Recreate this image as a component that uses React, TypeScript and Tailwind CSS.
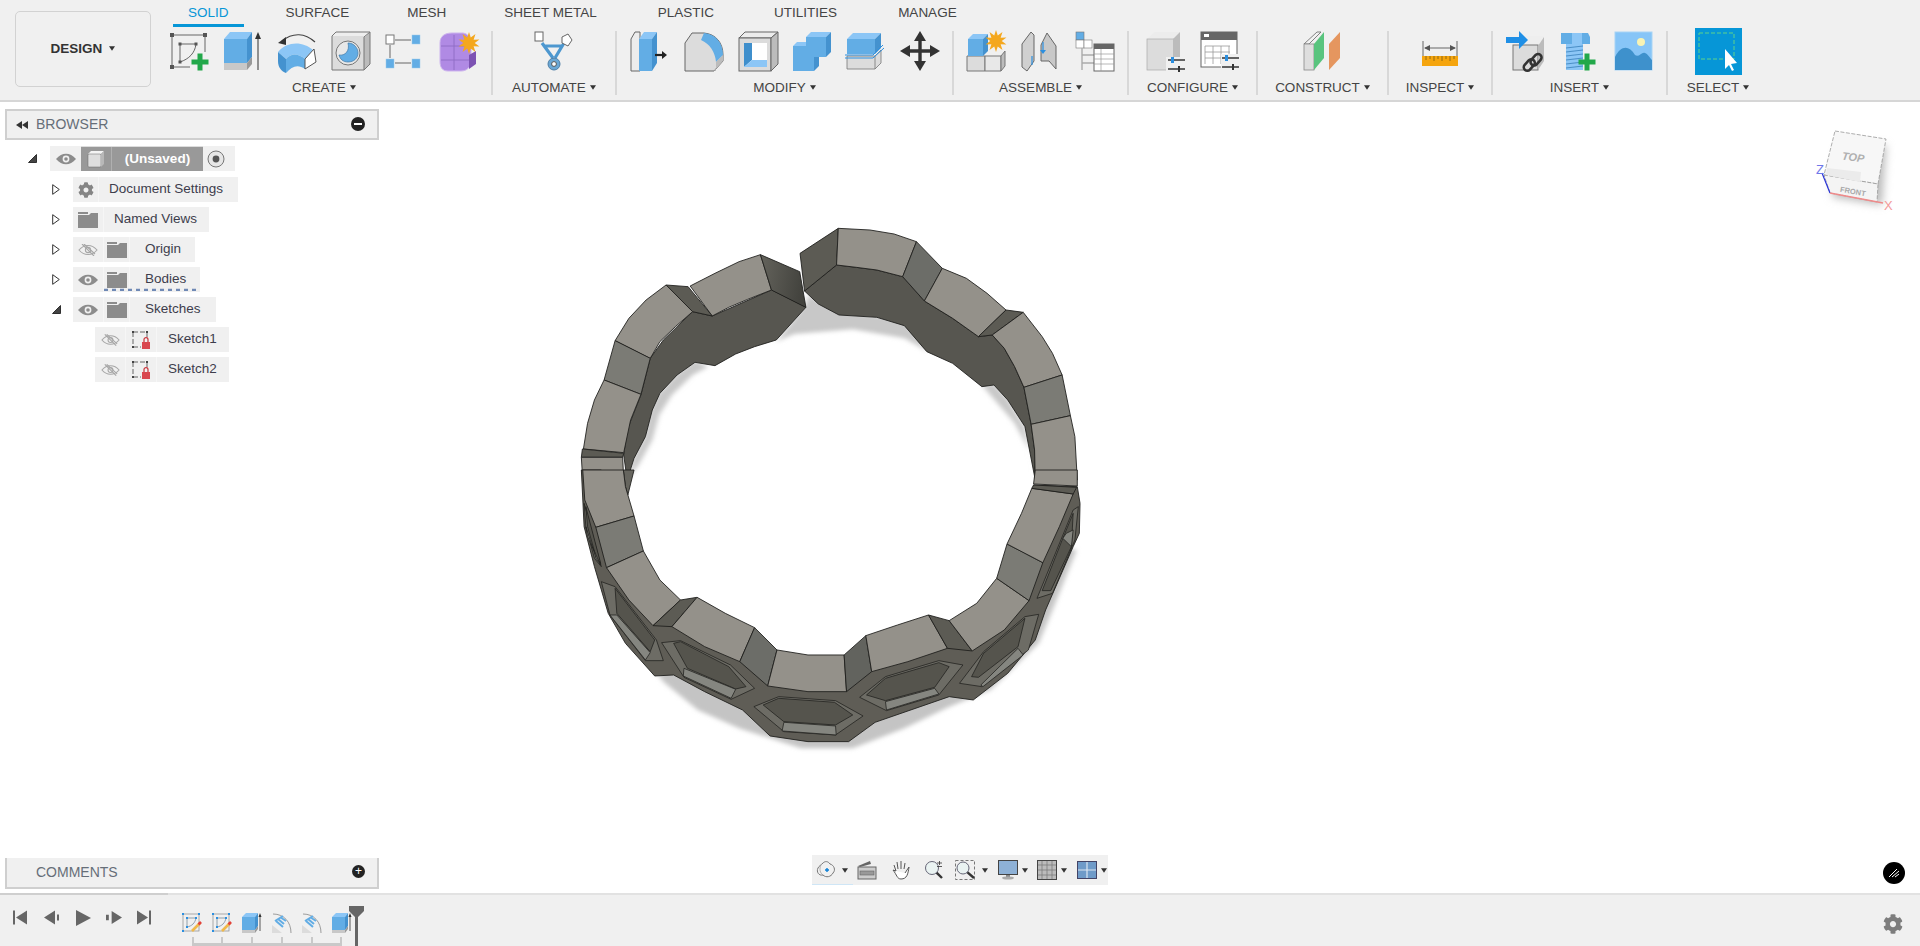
import { Fragment } from "react";
import type { ReactNode } from "react";
import { FaCog } from "react-icons/fa";

const starPoints = (cx: number, cy: number, r: number, n = 10) => {
  const pts: string[] = [];
  for (let i = 0; i < n * 2; i++) {
    const rad = i % 2 === 0 ? r : r * 0.52;
    const a = (Math.PI * i) / n - Math.PI / 2;
    pts.push(`${cx + rad * Math.cos(a)},${cy + rad * Math.sin(a)}`);
  }
  return pts.join(" ");
};

const Ico = ({ children, box = "0 0 40 40", cls = "w-10 h-10" }: { children: ReactNode; box?: string; cls?: string }) => (
  <svg viewBox={box} className={`${cls} shrink-0 overflow-visible`}>
    {children}
  </svg>
);

const Caret = ({ cls = "ml-[4px]" }: { cls?: string }) => (
  <svg viewBox="0 0 7 5" className={`w-[6px] h-[5px] inline-block align-[2px] ${cls}`}>
    <polygon points="0,0 7,0 3.5,5" fill="#333" />
  </svg>
);

const Plus = ({ x, y, s = 16 }: { x: number; y: number; s?: number }) => (
  <path d={`M${x - s / 2} ${y}H${x + s / 2}M${x} ${y - s / 2}V${y + s / 2}`} stroke="#22a84a" strokeWidth={s / 3.4} fill="none" />
);

const Cube = ({ x, y, w, h, d, top = "#8cc6f6", front = "#62ade5", side = "#4492cf" }: { x: number; y: number; w: number; h: number; d: number; top?: string; front?: string; side?: string }) => (
  <g>
    <polygon points={`${x},${y} ${x + d},${y - d} ${x + w + d},${y - d} ${x + w},${y}`} fill={top} />
    <rect x={x} y={y} width={w} height={h} fill={front} />
    <polygon points={`${x + w},${y} ${x + w + d},${y - d} ${x + w + d},${y + h - d} ${x + w},${y + h}`} fill={side} />
  </g>
);

const SketchIcon = () => (
  <Ico>
    <path d="M3 4H36M3 4V36M3 36H21M36 4V21" stroke="#666" strokeWidth="1" fill="none" />
    {[[3, 4], [36, 4], [3, 36]].map(([x, y]) => (
      <rect key={x * y + x} x={x - 2} y={y - 2} width="4" height="4" fill="#555" />
    ))}
    <path d="M11 13H27M11 13V31M27 13C26 22 20 28 11 31" stroke="#666" strokeWidth="1" fill="none" />
    {[[11, 13], [27, 13], [11, 31]].map(([x, y]) => (
      <rect key={x * y + x} x={x - 1.5} y={y - 1.5} width="3" height="3" fill="#555" />
    ))}
    <Plus x={31} y={31} s={17} />
  </Ico>
);

const ExtrudeIcon = () => (
  <Ico>
    <polygon points="1,8 7,1 29,1 24,8" fill="#8cc6f6" />
    <rect x="1" y="8" width="23" height="24" fill="#62ade5" />
    <polygon points="24,8 29,1 29,26 24,32" fill="#4492cf" />
    <rect x="1" y="32" width="23" height="7" fill="#c8c8c8" />
    <polygon points="24,32 29,26 29,33 24,39" fill="#999" />
    <path d="M35 39V4" stroke="#333" strokeWidth="1" />
    <polygon points="32,8 35,1 38,8" fill="#333" />
  </Ico>
);

const RevolveIcon = () => (
  <Ico>
    <path d="M5 10C16 1 28 2 38 11" stroke="#444" strokeWidth="1.2" fill="none" />
    <polygon points="1,12 9,6 9,14" fill="#333" />
    <path d="M1 21C10 10 26 10 36 19L28 28C21 22 14 22 9 28Z" fill="#8cc6f6" />
    <path d="M1 21L9 28V42C4 40 1 36 1 30Z" fill="#4492cf" />
    <path d="M9 28C14 22 21 22 28 28V38C21 33 15 35 9 42Z" fill="#62ade5" />
    <path d="M28 28L37 18L39 31L28 38Z" fill="#fff" stroke="#555" strokeWidth="1" />
  </Ico>
);

const BoxCircleIcon = () => (
  <Ico>
    <polygon points="1,4 5,1 39,1 33,7 1,7" fill="#eee" />
    <rect x="1" y="5" width="33" height="34" fill="#dcdcdc" />
    <polygon points="33,7 39,1 39,33 33,39" fill="#bcbcbc" />
    <path d="M1 39V5L5 1H39V33L33 39ZM33 39V6L39 1" stroke="#777" strokeWidth="1" fill="none" />
    <circle cx="17" cy="22" r="12" fill="#e8e8e8" stroke="#777" strokeWidth="1" />
    <path d="M17 12C23 12 27 17 27 22C27 27 23 31 17 31C12 31 9 28 8 24C14 25 19 20 17 12Z" fill="#62ade5" stroke="#3d78a8" strokeWidth=".7" />
  </Ico>
);

const PatternIcon = () => (
  <Ico>
    <path d="M10 9H26M5 14V27M10 32H26" stroke="#666" strokeWidth="1" />
    <rect x="1" y="4" width="8" height="9" fill="#fff" stroke="#777" />
    <rect x="27" y="4" width="8" height="9" fill="#62ade5" stroke="#9cc9ea" strokeWidth=".5" />
    <rect x="1" y="28" width="8" height="9" fill="#62ade5" stroke="#9cc9ea" strokeWidth=".5" />
    <rect x="27" y="28" width="8" height="9" fill="#62ade5" stroke="#9cc9ea" strokeWidth=".5" />
  </Ico>
);

const FormIcon = () => (
  <Ico>
    <path d="M1 12C1 5 6 2 13 2H24C30 3 32 8 32 14V30C32 36 28 40 22 40H9C3 40 1 36 1 30Z" fill="#b08ae4" stroke="#cdb4ee" />
    <path d="M2 15H30M2 29H30M15 4V39" stroke="#8f6bc4" strokeWidth=".9" />
    <path d="M30 24L37 20V33L30 38Z" fill="#7d53b3" />
    <polygon points={starPoints(30, 12, 11)} fill="#f4a71d" />
  </Ico>
);

const AutomateIcon = () => (
  <Ico>
    <path d="M8 12L19 27M30 12L21 27M11 15H28M19 27V33" stroke="#4d97cf" strokeWidth="3.2" fill="none" />
    <rect x="1" y="1" width="8" height="9" fill="#fff" stroke="#666" />
    <polygon points="28,6 34,3 38,9 34,15 28,12" fill="#fff" stroke="#666" />
    <circle cx="20" cy="33" r="6" fill="#6aa7d4" stroke="#4d7ea6" />
    <circle cx="20" cy="33" r="2.4" fill="#fff" stroke="#555" />
  </Ico>
);

const PressPullIcon = () => (
  <Ico>
    <polygon points="1,8 5,1 10,1 10,40 1,40" fill="#ececec" stroke="#666" />
    <polygon points="9,8 14,1 27,1 22,8" fill="#8cc6f6" />
    <rect x="9" y="8" width="13" height="32" fill="#62ade5" />
    <polygon points="22,8 27,1 27,32 22,40" fill="#4492cf" />
    <path d="M25 24H32" stroke="#222" strokeWidth="2.2" />
    <polygon points="32,20 37,24 32,28" fill="#222" />
  </Ico>
);

const FilletIcon = () => (
  <Ico>
    <path d="M1 40V12L8 2H20C32 3 39 12 39 24V30L30 40Z" fill="#dcdcdc" stroke="#666" />
    <path d="M20 2C32 3 39 12 39 24L32 31C31 21 26 13 17 9Z" fill="#62ade5" />
    <path d="M30 40L39 30V24L32 31V40Z" fill="#bcbcbc" />
  </Ico>
);

const ShellIcon = () => (
  <Ico>
    <polygon points="1,7 7,1 40,1 33,7" fill="#ececec" stroke="#666" />
    <rect x="1" y="7" width="32" height="33" fill="#dcdcdc" stroke="#666" />
    <polygon points="33,7 40,1 40,33 33,40" fill="#bcbcbc" stroke="#666" />
    <rect x="6" y="12" width="23" height="24" fill="#fff" />
    <polygon points="6,12 14,12 14,29 6,36" fill="#3f8fcc" />
    <polygon points="14,29 29,29 29,36 6,36" fill="#8cc6f6" />
  </Ico>
);

const CombineIcon = () => (
  <Ico>
    <polygon points="1,15 5,11 15,11 15,15" fill="#8cc6f6" />
    <polygon points="14,6 19,1 39,1 34,6" fill="#8cc6f6" />
    <polygon points="1,15 14,15 14,6 34,6 34,26 22,26 22,40 1,40" fill="#62ade5" />
    <polygon points="34,6 39,1 39,21 34,26" fill="#4492cf" />
    <polygon points="22,26 27,26 27,35 22,40" fill="#4492cf" />
  </Ico>
);

const SplitIcon = () => (
  <Ico>
    <polygon points="1,25 29,25 35,19 35,32 29,38 1,38" fill="#dcdcdc" stroke="#777" strokeWidth=".8" />
    <path d="M29 25V38" stroke="#777" strokeWidth=".8" />
    <Cube x={1} y={8} w={28} h={15} d={6} />
    <path d="M-1 27H27L38 17M-1 24H27L37 14" stroke="#2b8fe0" strokeWidth="1" fill="none" />
  </Ico>
);

const MoveIcon = () => (
  <Ico>
    <path d="M20 8V32M8 20H32" stroke="#333" strokeWidth="3.4" />
    <polygon points="20,0 26,10 14,10" fill="#333" />
    <polygon points="20,40 26,30 14,30" fill="#333" />
    <polygon points="0,20 10,14 10,26" fill="#333" />
    <polygon points="40,20 30,14 30,26" fill="#333" />
  </Ico>
);

const AsmNewIcon = () => (
  <Ico>
    <polygon points="0,40 0,25 18,25 18,40" fill="#dcdcdc" stroke="#777" />
    <polygon points="18,40 18,25 34,25 34,40" fill="#e8e8e8" stroke="#777" />
    <polygon points="34,25 38,20 38,35 34,40" fill="#bcbcbc" stroke="#777" />
    <Cube x={1} y={8} w={15} h={17} d={5} />
    <polygon points={starPoints(29, 10, 11)} fill="#f4a71d" />
  </Ico>
);

const JointIcon = () => (
  <Ico>
    <path d="M1 13L10 1L13 4V30L6 40L1 36Z" fill="#d0d0d0" stroke="#666" />
    <path d="M20 24V14L26 2L35 15V38L28 30L20 30Z" fill="#c8c8c8" stroke="#666" />
    <path d="M11 25V34M22 11V20" stroke="#2b8fe0" strokeWidth="1.2" />
    <polygon points="19,19 25,19 22,23" fill="#2b8fe0" />
  </Ico>
);

const BomIcon = () => (
  <Ico>
    <rect x="1" y="1" width="8" height="8" fill="#62ade5" stroke="#777" strokeWidth=".6" />
    <rect x="1" y="9" width="8" height="8" fill="#fff" stroke="#777" strokeWidth=".6" />
    <rect x="9" y="9" width="8" height="8" fill="#fff" stroke="#777" strokeWidth=".6" />
    <path d="M7 17V39M7 24H19M7 32H19" stroke="#aaa" strokeWidth="1.4" />
    <rect x="19" y="13" width="20" height="27" fill="#fff" stroke="#666" />
    <rect x="19" y="13" width="20" height="5" fill="#666" />
    <path d="M19 23H39M19 28H39M19 33H39M26 18V40" stroke="#999" strokeWidth=".7" />
  </Ico>
);

const Sliders = ({ x, y }: { x: number; y: number }) => (
  <g>
    <path d={`M${x} ${y}H${x + 17}M${x} ${y + 9}H${x + 17}`} stroke="#333" strokeWidth="1.6" />
    <rect x={x + 3} y={y - 3} width="3" height="6" fill="#2b8fe0" />
    <rect x={x + 10} y={y + 6} width="2" height="6" fill="#333" />
  </g>
);

const ConfigCubeIcon = () => (
  <Ico>
    <polygon points="1,8 9,1 34,1 27,8" fill="#ececec" />
    <rect x="1" y="8" width="27" height="31" fill="#dcdcdc" stroke="#aaa" strokeWidth=".7" />
    <polygon points="27,8 34,1 34,30 27,38" fill="#bcbcbc" />
    <rect x="20" y="26" width="20" height="14" fill="#f0f0f0" />
    <Sliders x={22} y={29} />
  </Ico>
);

const ConfigTableIcon = () => (
  <Ico>
    <rect x="1" y="1" width="36" height="35" fill="#fff" stroke="#666" />
    <rect x="1" y="1" width="36" height="8" fill="#666" />
    <rect x="4" y="3" width="5" height="3" fill="#fff" />
    <path d="M5 15H30M5 21H30M5 27H30M5 15V33M13 15V33M21 15V33M29 15V33" stroke="#999" strokeWidth=".8" />
    <rect x="21" y="23" width="19" height="18" fill="#f0f0f0" />
    <Sliders x={22} y={27} />
  </Ico>
);

const ConstructIcon = () => (
  <Ico>
    <polygon points="1,13 14,1 18,1 6,13" fill="#f2f2f2" stroke="#666" strokeWidth=".8" />
    <rect x="1" y="13" width="10" height="26" fill="#dedede" stroke="#888" strokeWidth=".8" />
    <polygon points="11,13 21,1 21,27 11,39" fill="#59c47e" />
    <polygon points="26,13 37,1 37,27 26,39" fill="#e5965f" />
  </Ico>
);

const MeasureIcon = () => (
  <Ico box="0 0 36 30" cls="w-[36px] h-[30px] mt-[10px]">
    <path d="M1 0V15M35 0V15M3 7H33" stroke="#666" strokeWidth="1" />
    <polygon points="2,7 8,4 8,10" fill="#555" />
    <polygon points="34,7 28,4 28,10" fill="#555" />
    <rect x="0" y="15" width="36" height="10" fill="#f5a50e" />
    <path d="M4 15V19M8 15V18M12 15V20M16 15V18M20 15V20M24 15V18M28 15V20M32 15V18" stroke="#7a5b12" strokeWidth=".8" />
  </Ico>
);

const DeriveIcon = () => (
  <Ico>
    <polygon points="7,15 13,5 38,5 33,15" fill="#eee" />
    <rect x="7" y="14" width="25" height="25" fill="#dcdcdc" stroke="#777" />
    <polygon points="32,15 38,6 38,30 32,39" fill="#bcbcbc" />
    <path d="M0 9H14" stroke="#1f8fe6" strokeWidth="6" />
    <polygon points="13,0 22,9 13,18" fill="#1f8fe6" />
    <g fill="none" stroke="#333" strokeWidth="2.6">
      <rect x="27" y="22" width="7" height="13" rx="3.5" transform="rotate(42 30 28)" />
      <rect x="20" y="28" width="7" height="13" rx="3.5" transform="rotate(42 24 34)" />
    </g>
  </Ico>
);

const BoltIcon = () => (
  <Ico>
    <polygon points="1,2 28,2 30,6 30,13 1,13" fill="#62ade5" />
    <rect x="12" y="2" width="10" height="11" fill="#8cc6f6" />
    <rect x="6" y="13" width="17" height="26" fill="#8cc6f6" />
    <path d="M6 17L23 15M6 21L23 19M6 25L23 23M6 29L23 27M6 33L23 31M6 37L23 35" stroke="#4b8fc7" strokeWidth="1.1" />
    <Plus x={27} y={31} s={17} />
  </Ico>
);

const PictureIcon = () => (
  <Ico>
    <rect x="1" y="1" width="37" height="38" fill="#87c5f7" stroke="#a7d4f5" />
    <path d="M1 26C7 14 15 14 21 24C25 27 28 20 31 22C34 23 36 27 38 29V39H1Z" fill="#3e91cc" />
    <circle cx="27" cy="11" r="4" fill="#f8f3b4" />
  </Ico>
);

const SelectIcon = () => (
  <svg viewBox="0 0 47 47" className="w-[47px] h-[47px] -mt-[3px]">
    <rect width="47" height="47" fill="#0696d7" />
    <rect x="4" y="5" width="35" height="26" fill="none" stroke="#5fd38a" strokeWidth="1" strokeDasharray="4 2" />
    <polygon points="30,21 30,41 34,37 37,43 39,42 36,36 42,35" fill="#fff" />
  </svg>
);

const groups: { label: string; cls: string; icons: ReactNode[] }[] = [
  { label: "CREATE", cls: "w-[336px] border-r-2", icons: [<SketchIcon />, <ExtrudeIcon />, <RevolveIcon />, <BoxCircleIcon />, <PatternIcon />, <FormIcon />] },
  { label: "AUTOMATE", cls: "w-[124px] border-r-2", icons: [<AutomateIcon />] },
  { label: "MODIFY", cls: "w-[337px] border-r-2", icons: [<PressPullIcon />, <FilletIcon />, <ShellIcon />, <CombineIcon />, <SplitIcon />, <MoveIcon />] },
  { label: "ASSEMBLE", cls: "w-[175px] border-r-2", icons: [<AsmNewIcon />, <JointIcon />, <BomIcon />] },
  { label: "CONFIGURE", cls: "w-[129px] border-r-2", icons: [<ConfigCubeIcon />, <ConfigTableIcon />] },
  { label: "CONSTRUCT", cls: "w-[131px] border-r-2", icons: [<ConstructIcon />] },
  { label: "INSPECT", cls: "w-[104px] border-r-2", icons: [<MeasureIcon />] },
  { label: "INSERT", cls: "w-[175px] border-r-2", icons: [<DeriveIcon />, <BoltIcon />, <PictureIcon />] },
  { label: "SELECT", cls: "w-[100px]", icons: [<SelectIcon />] },
];

const tabs = [
  { name: "SOLID", gap: "" },
  { name: "SURFACE", gap: "ml-[27px]" },
  { name: "MESH", gap: "ml-[28px]" },
  { name: "SHEET METAL", gap: "ml-[28px]" },
  { name: "PLASTIC", gap: "ml-[31px]" },
  { name: "UTILITIES", gap: "ml-[30px]" },
  { name: "MANAGE", gap: "ml-[31px]" },
];

const Toolbar = () => (
  <div className="h-[102px] shrink-0 flex bg-[#f0f0f0] border-b-2 border-[#d6d6d6]">
    <button className="ml-[15px] mt-[11px] w-[136px] h-[76px] shrink-0 rounded-[5px] border border-[#d2d2d2] text-[13.5px] font-bold text-[#333]">
      DESIGN
      <Caret cls="ml-[7px]" />
    </button>
    <div className="ml-[6px] flex flex-col">
      <div className="h-[27px] flex ml-[16px]">
        {tabs.map((t, i) => (
          <div key={t.name} className={`px-[15px] h-[27px] leading-[26px] text-[13.5px] ${t.gap} ${i === 0 ? "border-b-[3px] border-[#0696d7] text-[#0696d7]" : "text-[#444]"}`}>
            {t.name}
          </div>
        ))}
      </div>
      <div className="flex mt-[4px]">
        {groups.map((g) => (
          <div key={g.label} className={`${g.cls} h-[64px] flex flex-col border-[#d8d8d8]`}>
            <div className="h-[42px] flex justify-center gap-[14px]">
              {g.icons.map((icon, i) => (
                <Fragment key={i}>{icon}</Fragment>
              ))}
            </div>
            <div className="mt-[8px] leading-[14px] text-center text-[13.5px] text-[#444]">
              {g.label}
              <Caret />
            </div>
          </div>
        ))}
      </div>
    </div>
  </div>
);

const Eye = ({ off = false, small = false }: { off?: boolean; small?: boolean }) => (
  <svg viewBox="0 0 20 12" className={small ? "w-[19px] h-[12px]" : "w-[20px] h-[12px]"}>
    {off ? (
      <g fill="none" stroke="#a6a6a6" strokeWidth="1.1">
        <path d="M1 6C6 0 14 0 19 6C14 12 6 12 1 6Z" />
        <circle cx="10" cy="6" r="2.6" />
        <path d="M4 0L16 12M6 0L17 10" />
      </g>
    ) : (
      <g>
        <path d="M0 6C6 -1 14 -1 20 6C14 13 6 13 0 6Z" fill="#8c8c8c" />
        <circle cx="10" cy="6" r="3.4" fill="#f0f0f0" />
        <circle cx="10" cy="6" r="1.8" fill="#8c8c8c" />
      </g>
    )}
  </svg>
);

const Folder = () => (
  <svg viewBox="0 0 20 16" className="w-[20px] h-[16px]">
    <path d="M0 0H10V2H0ZM0 3H11L13 1H20V16H0Z" fill="#8c8c8c" />
  </svg>
);

const SketchLock = () => (
  <svg viewBox="0 0 20 20" className="w-[20px] h-[20px]">
    <path d="M2 2H16M2 2V17M2 17H10M16 2V8" stroke="#666" strokeWidth="1" strokeDasharray="5 2" fill="none" />
    <rect x="1" y="1" width="2" height="2" fill="#444" />
    <rect x="15" y="1" width="2" height="2" fill="#444" />
    <rect x="1" y="16" width="2" height="2" fill="#444" />
    <path d="M13 12V9.5C13 7 17 7 17 9.5V12" stroke="#c9323a" strokeWidth="1.2" fill="none" />
    <rect x="11" y="12" width="8" height="7" fill="#d9474f" />
  </svg>
);

const TriOpen = () => (
  <svg viewBox="0 0 9 9" className="w-[9px] h-[9px]">
    <polygon points="8.5,0.5 8.5,8.5 0.5,8.5" fill="#444" stroke="#111" strokeWidth=".8" />
  </svg>
);

const TriClosed = () => (
  <svg viewBox="0 0 8 11" className="w-[8px] h-[11px]">
    <polygon points="0.7,0.7 7.3,5.5 0.7,10.3" fill="#fff" stroke="#333" strokeWidth="1" />
  </svg>
);

const Cell = ({ w, children }: { w: string; children: ReactNode }) => (
  <div className={`${w} h-full flex items-center justify-center bg-[#f0f0f0] border-r border-[#f6f6f6]`}>{children}</div>
);

const rows: { indent: string; open?: boolean; icons: { w: string; el: ReactNode }[]; label: string; pad: string; wave?: boolean }[] = [
  { indent: "pl-[47px]", open: false, icons: [{ w: "w-[26px]", el: <FaCog className="text-[#858585] text-[16px]" /> }], label: "Document Settings", pad: "pl-[10px] pr-[15px]" },
  { indent: "pl-[47px]", open: false, icons: [{ w: "w-[31px]", el: <Folder /> }], label: "Named Views", pad: "pl-[10px] pr-[12px]" },
  { indent: "pl-[47px]", open: false, icons: [{ w: "w-[31px]", el: <Eye off /> }, { w: "w-[26px]", el: <Folder /> }], label: "Origin", pad: "pl-[15px] pr-[14px]" },
  { indent: "pl-[47px]", open: false, icons: [{ w: "w-[31px]", el: <Eye /> }, { w: "w-[26px]", el: <Folder /> }], label: "Bodies", pad: "pl-[15px] pr-[14px]", wave: true },
  { indent: "pl-[47px]", open: true, icons: [{ w: "w-[31px]", el: <Eye /> }, { w: "w-[26px]", el: <Folder /> }], label: "Sketches", pad: "pl-[15px] pr-[15px]" },
  { indent: "pl-[90px]", icons: [{ w: "w-[31px]", el: <Eye off small /> }, { w: "w-[31px]", el: <SketchLock /> }], label: "Sketch1", pad: "pl-[11px] pr-[12px]" },
  { indent: "pl-[90px]", icons: [{ w: "w-[31px]", el: <Eye off small /> }, { w: "w-[31px]", el: <SketchLock /> }], label: "Sketch2", pad: "pl-[11px] pr-[12px]" },
];

const PanelHead = ({ title, children, cls }: { title: string; children?: ReactNode; cls: string }) => (
  <div className={`${cls} h-[31px] bg-[#f0f0f0] border-[#cfcfcf] flex items-center text-[14px] text-[#666e78]`}>
    <div className="w-[29px] flex justify-center">{children}</div>
    <span className="flex-1">{title}</span>
  </div>
);

const Browser = () => (
  <div>
    <PanelHead title="BROWSER" cls="border-2">
      <svg viewBox="0 0 12 8" className="w-[12px] h-[8px]">
        <polygon points="6,0 6,8 0,4" fill="#333" />
        <polygon points="12,0 12,8 6,4" fill="#333" />
      </svg>
    </PanelHead>
    <div className="mt-[6px] flex flex-col gap-[5px] text-[13.5px] text-[#3d3d4c]">
      <div className="h-[25px] mb-[1px] flex items-center pl-[23px]">
        <div className="w-[22px]">
          <TriOpen />
        </div>
        <div className="h-[25px] flex items-center bg-[#f0f0f0]">
          <div className="w-[31px] flex justify-center">
            <Eye />
          </div>
          <div className="w-[122px] h-[25px] bg-[#999999] flex items-center font-bold text-white border-t border-[#ddd]">
            <div className="w-[31px] h-full flex justify-center items-center border-r border-[#b0b0b0]">
              <svg viewBox="0 0 18 18" className="w-[18px] h-[18px]">
                <polygon points="1,4 4,1 17,1 14,4" fill="#f4f4f4" />
                <rect x="1" y="4" width="13" height="13" rx="1" fill="#dedede" stroke="#666" strokeWidth=".5" />
                <polygon points="14,4 17,1 17,14 14,17" fill="#b8b8b8" />
              </svg>
            </div>
            <span className="flex-1 text-center">(Unsaved)</span>
          </div>
          <div className="w-[32px] flex justify-start pl-[4px]">
            <svg viewBox="0 0 18 18" className="w-[18px] h-[18px]">
              <circle cx="9" cy="9" r="8" fill="#e6e6e6" stroke="#777" />
              <circle cx="9" cy="9" r="3.4" fill="#555" />
            </svg>
          </div>
        </div>
      </div>
      {rows.map((r) => (
        <div key={r.label} className={`h-[25px] flex items-center ${r.indent}`}>
          {r.open !== undefined && <div className="w-[21px]">{r.open ? <TriOpen /> : <TriClosed />}</div>}
          <div className="relative h-[25px] flex items-center">
            {r.icons.map((c, i) => (
              <Cell key={i} w={c.w}>
                {c.el}
              </Cell>
            ))}
            <div className={`h-full flex items-center bg-[#f0f0f0] ${r.pad}`}>{r.label}</div>
            {r.wave && (
              <svg className="absolute left-[31px] bottom-[1px] w-[96px] h-[6px]" viewBox="0 0 96 6">
                <path d="M0 5L96 5" stroke="#6f89b5" strokeWidth="2.6" strokeDasharray="4 4" />
              </svg>
            )}
          </div>
        </div>
      ))}
    </div>
  </div>
);

const Ring = () => {
  const light = "#94918a";
  const mid = "#7b7b75";
  const dark = "#5c5b54";
  const upper: [string, string][] = [
    ["378,228 450,190 520,155 582,134 614,240 545,268 490,292 442,318", light],
    ["582,134 696,185 714,292 614,240", "url(#wedge)"],
    ["308,225 372,230 442,318 385,305", dark],
    ["308,225 385,305 335,350 290,395 262,445 160,392 200,325 250,270", light],
    ["160,392 262,445 235,553 128,510", mid],
    ["128,510 235,553 205,630 185,728 68,717 80,640 100,570", light],
    ["65,717 185,730 182,742 62,742", dark],
    ["62,742 182,742 185,810 66,810", light],
    ["808,55 803,165 710,243 697,130", dark],
    ["808,55 900,60 970,72 1035,95 995,200 920,180 860,172 803,165", light],
    ["1035,95 1110,175 1058,273 995,200", "#6c6d68"],
    ["1110,175 1180,205 1240,250 1295,300 1215,380 1140,325 1058,273", light],
    ["1295,300 1345,307 1255,375 1215,380", dark],
    ["1345,307 1400,380 1430,430 1458,495 1347,532 1320,470 1290,415 1255,375", light],
    ["1458,495 1482,617 1368,643 1347,532", mid],
    ["1482,617 1495,680 1502,810 1380,810 1378,720 1368,643", light],
  ];
  const lower: [string, string][] = [
    ["184,0 215,0 197,75 190,50", "#66655e"],
    ["66,0 184,0 190,50 215,138 104,172 72,90", light],
    ["104,172 215,138 242,243 135,293", mid],
    ["135,293 242,243 290,330 350,390 270,467 200,390", light],
    ["350,390 398,382 325,470 270,467", dark],
    ["398,382 480,430 565,473 522,575 420,530 325,470", light],
    ["565,473 630,540 603,648 522,575", "#6c6d68"],
    ["630,540 720,555 825,555 832,665 720,665 603,648", light],
    ["825,555 888,497 905,605 832,665", "#62635e"],
    ["888,497 980,465 1070,435 1125,535 1010,575 905,605", light],
    ["1070,435 1130,452 1197,543 1125,535", dark],
    ["1130,452 1210,400 1268,325 1362,392 1290,480 1197,543", light],
    ["1268,325 1298,222 1402,278 1362,392", mid],
    ["1298,222 1340,130 1370,55 1490,72 1450,170 1402,278", light],
    ["1375,45 1500,52 1490,72 1370,55", dark],
    ["1380,0 1502,0 1502,48 1375,42", light],
  ];
  const hexes: string[][] = [
    ["563,710 635,680 800,692 880,738 800,795 650,785", "590,705 635,685 797,697 850,735 800,765 650,755", "650,757 800,768 802,795 645,783"],
    ["295,518 350,512 495,585 565,655 497,688 360,622", "330,520 350,515 490,590 540,650 510,657 370,595", "360,595 510,658 497,685 358,618"],
    ["870,682 945,620 1100,572 1170,585 1100,675 948,722", "890,675 945,625 1100,578 1130,590 1088,652 945,692", "945,695 1088,655 1100,672 948,720"],
    ["120,335 160,350 280,510 300,572 248,572 145,435", "160,355 275,510 262,545 165,430", "145,435 165,435 262,548 248,570"],
    ["1160,640 1230,545 1350,440 1390,433 1360,540 1225,650", "1195,620 1230,550 1350,445 1330,530 1215,622", "1222,645 1330,535 1345,555 1228,650"],
    ["1385,385 1490,120 1505,110 1495,210 1430,370", "1400,362 1460,205 1490,130 1485,230 1425,362", "1460,205 1485,230 1490,180 1470,190"],
    ["70,100 120,290 100,265 75,170", "75,110 118,280 105,262 80,170", "75,170 105,265 118,285 80,200"],
  ];
  return (
    <svg className="absolute left-[560px] top-[108px] w-[540px] h-[560px] overflow-visible" viewBox="560 210 540 560">
      <defs>
        <linearGradient id="wedge" x1="0" y1="0" x2="1" y2="0.2">
          <stop offset="0" stopColor="#64635c" />
          <stop offset="1" stopColor="#43433e" />
        </linearGradient>
        <filter id="soft" x="-20%" y="-20%" width="140%" height="140%">
          <feGaussianBlur stdDeviation="7" />
        </filter>
      </defs>
      <g transform="translate(560 210) scale(.3444 .3333)" strokeLinejoin="round">
        <g fill="#c8c8c8" filter="url(#soft)">
          <polygon points="720,255 810,300 1000,330 1070,425 1000,385 850,358 680,372 628,395 714,280" />
          <polygon points="392,450 340,490 285,550 262,600 245,680 212,745 195,810 228,765 268,690 288,615 325,555 385,495 430,470" />
          <polygon points="1225,525 1260,520 1300,565 1350,650 1380,810 1365,725 1320,640 1270,580" />
        </g>
        <polygon points="385,305 442,318 614,240 714,292 628,390 565,410 510,432 450,467 392,457 340,495 290,550 268,600 248,680 215,745 195,810 185,735 195,660 235,555 262,445 300,390" fill="#575650" stroke="#1f1f1c" strokeWidth="2.6" />
        <polygon points="710,243 803,165 860,172 920,180 995,200 1058,273 1140,325 1215,380 1255,375 1290,415 1320,470 1347,532 1368,643 1378,720 1380,810 1350,650 1300,570 1260,525 1225,530 1140,460 1065,425 1000,347 920,322 810,315 750,282" fill="#575650" stroke="#1f1f1c" strokeWidth="2.6" />
        {upper.map(([p, f]) => (
          <polygon key={p} points={p} fill={f} stroke="#1f1f1c" strokeWidth="2.6" />
        ))}
      </g>
      <g transform="translate(560 470) scale(.3444 .3333)" strokeLinejoin="round">
        <polygon points="275,600 300,635 400,720 520,775 700,835 850,835 1000,775 1130,710 1250,660 1390,520 1430,420 1500,240 1440,230 1200,600 800,700 400,600" fill="#c4c4c4" filter="url(#soft)" />
        <polygon points="62,0 70,170 100,290 140,430 190,520 275,618 330,615 420,665 530,720 610,798 720,815 838,815 915,757 1130,680 1200,690 1300,610 1380,510 1410,420 1490,230 1508,190 1510,100 1502,50 1375,45 1420,150 1330,300 1200,470 1000,520 730,610 600,580 450,470 290,400 170,220 120,100 120,0" fill="#5f5d56" stroke="#1f1f1c" strokeWidth="2.6" />
        {hexes.map(([o, f, s]) => (
          <g key={o} stroke="#1f1f1c" strokeWidth="2.2">
            <polygon points={o} fill="#6d6c65" />
            <polygon points={f} fill="#55544d" />
            <polygon points={s} fill="#858680" />
          </g>
        ))}
        {lower.map(([p, f]) => (
          <polygon key={p} points={p} fill={f} stroke="#1f1f1c" strokeWidth="2.6" />
        ))}
      </g>
    </svg>
  );
};

const ViewCube = () => (
  <svg className="absolute left-[1810px] top-[20px] w-[90px] h-[95px] overflow-visible" viewBox="1810 122 90 95">
    <defs>
      <filter id="cubeShadow" x="-30%" y="-30%" width="160%" height="160%">
        <feGaussianBlur stdDeviation="4" />
      </filter>
    </defs>
    <polygon points="1838,150 1886,145 1882,205 1832,197" fill="#bbb" filter="url(#cubeShadow)" />
    <polygon points="1835,131 1886,139 1878,184 1824,175" fill="#f7f7f7" stroke="#999" strokeWidth=".8" strokeDasharray="4 1.5" />
    <polygon points="1824,175 1878,184 1877,202 1830,193" fill="#f4f4f4" stroke="#999" strokeWidth=".8" strokeDasharray="4 1.5" />
    <polygon points="1827,168 1861,172 1860,182 1826,175" fill="#ebebeb" />
    <text x="1853" y="161" textAnchor="middle" transform="rotate(8 1853 158)" className="font-['Liberation_Sans',sans-serif] italic font-bold text-[11px]" fill="#b0b0b0">
      TOP
    </text>
    <text x="1853" y="194" textAnchor="middle" transform="rotate(10 1853 191)" className="font-['Liberation_Sans',sans-serif] font-bold text-[7.5px]" fill="#a8a8a8">
      FRONT
    </text>
    <path d="M1830 193L1822 173" stroke="#2a35d8" strokeWidth="1.2" />
    <path d="M1830 193L1883 203" stroke="#ef8a8a" strokeWidth="1.6" />
    <text x="1816" y="174" className="font-['Liberation_Sans',sans-serif] text-[13px]" fill="#6f78ea">
      Z
    </text>
    <text x="1884" y="210" className="font-['Liberation_Sans',sans-serif] text-[13px]" fill="#f39a9a">
      X
    </text>
  </svg>
);

const NavSmall = ({ children }: { children: ReactNode }) => (
  <svg viewBox="0 0 20 20" className="w-[20px] h-[20px] shrink-0">
    {children}
  </svg>
);

const Lens = ({ r = 6.5, cx = 9, cy = 8 }: { r?: number; cx?: number; cy?: number }) => (
  <g>
    <path d={`M${cx + r * 0.7} ${cy + r * 0.7}L19 18`} stroke="#333" strokeWidth="2.4" />
    <circle cx={cx} cy={cy} r={r} fill="#eaf3f2" stroke="#667" strokeWidth="1" />
  </g>
);

const NavBar = () => (
  <div className="absolute left-1/2 -translate-x-1/2 bottom-[8px] w-[296px] h-[30px] bg-[#f0f0f0] flex items-center pl-[4px]">
    <NavSmall>
      <path d="M7 3C9 1 12 1 14 4C18 5 20 10 17 13C15 17 10 18 7 15C3 16 0 12 2 8C3 6 5 5 7 3Z" fill="none" stroke="#777" strokeWidth="1" />
      <path d="M5 5C3 9 4 13 7 15" fill="none" stroke="#999" strokeWidth=".7" />
      <path d="M9 10H13M11 8V12" stroke="#0a7fd6" strokeWidth="1.4" />
    </NavSmall>
    <Caret cls="ml-[6px]" />
    <div className="ml-[9px]">
      <NavSmall>
        <path d="M1 6L13 1L14 4L3 7Z" fill="#666" />
        <rect x="1" y="7" width="18" height="12" fill="#ccc" stroke="#666" />
        <rect x="3" y="11" width="14" height="4" fill="#999" stroke="#666" strokeWidth=".6" />
      </NavSmall>
    </div>
    <div className="ml-[14px]">
      <NavSmall>
        <path d="M5 11L3 5M7 9L6 2M10 9V1M13 9L14 3M14 13L18 7C17 14 16 19 10 19C6 19 6 15 2 10L5 11" fill="#fff" stroke="#555" strokeWidth="1" />
      </NavSmall>
    </div>
    <div className="ml-[12px]">
      <NavSmall>
        <Lens />
        <path d="M14 3H19M16.5 1V5M14 6.5H19" stroke="#333" strokeWidth=".8" />
      </NavSmall>
    </div>
    <div className="ml-[12px]">
      <NavSmall>
        <rect x="0.5" y="0.5" width="19" height="19" fill="none" stroke="#777" strokeDasharray="3 2" />
        <Lens cx={8} cy={8} r={6} />
      </NavSmall>
    </div>
    <Caret cls="ml-[7px]" />
    <div className="ml-[10px]">
      <NavSmall>
        <rect x="0.5" y="0.5" width="19" height="14" fill="#8eb1d6" stroke="#444" />
        <rect x="8" y="15" width="4" height="2" fill="#888" />
        <ellipse cx="10" cy="18" rx="6" ry="1.6" fill="#aaa" />
      </NavSmall>
    </div>
    <Caret cls="ml-[4px]" />
    <div className="ml-[9px]">
      <NavSmall>
        <rect x="0.5" y="0.5" width="19" height="19" fill="#bbb" stroke="#444" />
        <path d="M5 1V19M10 1V19M15 1V19M1 5H19M1 10H19M1 15H19" stroke="#777" strokeWidth=".7" />
      </NavSmall>
    </div>
    <Caret cls="ml-[4px]" />
    <div className="ml-[10px]">
      <NavSmall>
        <rect x="0.5" y="1.5" width="19" height="17" fill="#6f9bc9" stroke="#446" />
        <path d="M10 2V18M1 10H19" stroke="#dce6f2" strokeWidth="1.2" />
      </NavSmall>
    </div>
    <Caret cls="ml-[4px]" />
    <div className="absolute left-0 bottom-0 w-[41px] h-[1px] bg-[#cfe6f6]" />
  </div>
);

const timelineItems = ["sketch", "sketch", "extrude", "fillet", "fillet", "extrude"];

const TimelineIcon = ({ kind }: { kind: string }) => (
  <svg viewBox="0 0 20 20" className="w-[20px] h-[20px]">
    {kind === "sketch" && (
      <g>
        <rect x="1" y="1" width="16" height="17" fill="none" stroke="#8a8a8a" strokeWidth=".7" />
        <path d="M5 5H14M5 5V14M14 5C13 10 10 13 5 14" stroke="#7a8a98" strokeWidth=".8" fill="none" />
        {[[1, 1], [17, 1], [1, 18], [5, 5], [14, 5], [5, 14]].map(([x, y]) => (
          <rect key={`${x}-${y}`} x={x - 1} y={y - 1} width="2" height="2" fill="#2b8fe0" />
        ))}
        <path d="M10 18L18 10" stroke="#f0b94a" strokeWidth="2.6" />
        <path d="M16.5 11.5L19 9" stroke="#e2413b" strokeWidth="2.6" />
      </g>
    )}
    {kind === "extrude" && (
      <g>
        <polygon points="0,4 4,0 16,0 13,4" fill="#8cc6f6" />
        <rect x="0" y="4" width="13" height="13" fill="#62ade5" />
        <polygon points="13,4 16,0 16,13 13,17" fill="#4492cf" />
        <rect x="0" y="17" width="13" height="3" fill="#c8c8c8" />
        <polygon points="13,17 16,13 16,16 13,20" fill="#999" />
        <path d="M18 18V2" stroke="#333" strokeWidth=".8" />
        <polygon points="16.5,4 18,0 19.5,4" fill="#333" />
      </g>
    )}
    {kind === "fillet" && (
      <g>
        <path d="M0 20V12L10 20Z" fill="#dcdcdc" />
        <path d="M1 1C12 1 19 9 19 20" fill="none" stroke="#888" strokeWidth=".8" />
        <path d="M3 8L11 3M4 8L11 14M6 6L12 11M8 4L14 8" stroke="#62ade5" strokeWidth="2" fill="none" />
      </g>
    )}
  </svg>
);

const Timeline = () => (
  <div className="h-[53px] shrink-0 bg-[#f0f0f0] border-t-2 border-[#e2e2e2] flex relative">
    <div className="absolute left-0 -top-[2px] w-[168px] h-[2px] bg-[#cfcfcf]" />
    <div className="flex items-center pl-[13px] h-[58%] mt-[8px] gap-[15px]">
      <svg viewBox="0 0 14 14" className="w-[14px] h-[15px] mr-[2px]"><path d="M0 0H2V14H0ZM14 0V14L3 7Z" fill="#666" /></svg>
      <svg viewBox="0 0 17 14" className="w-[17px] h-[15px]"><path d="M11 0V14L0 7ZM13 4H15V10H13Z" fill="#666" /></svg>
      <svg viewBox="0 0 15 16" className="w-[15px] h-[16px]"><path d="M0 0L15 8L0 16Z" fill="#666" /></svg>
      <svg viewBox="0 0 17 14" className="w-[16px] h-[15px]"><path d="M6 0V14L17 7ZM0 4H3V10H0Z" fill="#666" /></svg>
      <svg viewBox="0 0 14 14" className="w-[14px] h-[15px]"><path d="M14 0H12V14H14ZM0 0V14L11 7Z" fill="#666" /></svg>
    </div>
    <div className="ml-[31px] mt-[18px] relative flex gap-[10px] h-[20px]">
      {timelineItems.map((k, i) => (
        <TimelineIcon key={i} kind={k} />
      ))}
      <div className="absolute left-[10px] top-[24px] w-[150px] h-[9px] border-x-2 border-b-[3px] border-[#c9c9c9]" />
      <div className="absolute left-[39px] top-[24px] w-[2px] h-[6px] bg-[#c9c9c9]" />
      <div className="absolute left-[69px] top-[24px] w-[2px] h-[6px] bg-[#c9c9c9]" />
      <div className="absolute left-[99px] top-[24px] w-[2px] h-[6px] bg-[#c9c9c9]" />
      <div className="absolute left-[129px] top-[24px] w-[2px] h-[6px] bg-[#c9c9c9]" />
      <svg viewBox="0 0 15 40" className="absolute left-[167px] -top-[7px] w-[15px] h-[40px]">
        <path d="M0 0H15V5L9 11V40H6V11L0 5Z" fill="#666" />
      </svg>
    </div>
    <FaCog className="absolute right-[17px] top-[19px] text-[#7d7d7d] text-[20px]" />
  </div>
);

export default function App() {
  return (
    <div className="h-[946px] w-[1920px] flex flex-col overflow-hidden bg-white font-['Liberation_Sans',Arial,sans-serif]">
      <Toolbar />
      <div className="relative flex-1 flex">
        <div className="ml-[5px] mt-[7px] mb-[4px] w-[374px] flex flex-col justify-between">
          <div className="relative">
            <Browser />
            <div className="absolute right-[14px] top-[8px] w-[14px] h-[14px] rounded-full bg-[#222] flex items-center justify-center">
              <div className="w-[8px] h-[2px] bg-white" />
            </div>
          </div>
          <div className="relative">
            <PanelHead title="COMMENTS" cls="border-x-2 border-b-2" />
            <div className="absolute right-[14px] top-[7px] w-[13px] h-[13px] rounded-full bg-[#222] text-white text-[12px] leading-[12px] text-center">+</div>
          </div>
        </div>
        <Ring />
        <ViewCube />
        <NavBar />
        <div className="absolute left-[1883px] top-[760px] w-[22px] h-[22px] rounded-full bg-black flex items-center justify-center">
          <svg viewBox="0 0 12 10" className="w-[12px] h-[10px]">
            <path d="M1 9L9 1M4 9L11 3M7 9L11 6" stroke="#fff" strokeWidth="1" />
          </svg>
        </div>
      </div>
      <Timeline />
    </div>
  );
}
